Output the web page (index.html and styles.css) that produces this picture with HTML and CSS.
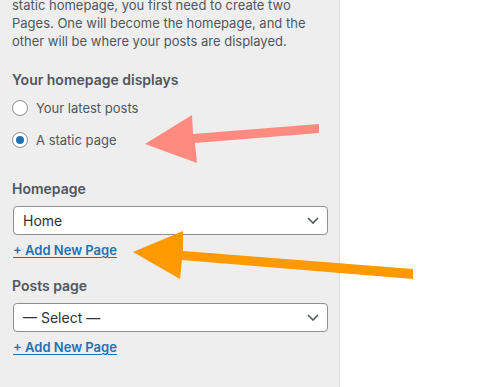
FILE: index.html
```html
<!DOCTYPE html>
<html lang="en">
<head>
    <meta charset="UTF-8">
    <title>Homepage Settings</title>
    <link rel="stylesheet" href="styles.css">
</head>
<body>
    <div class="page">
        <aside class="sidebar">
            <p class="description">static homepage, you first need to create two Pages. One will become the homepage, and the other will be where your posts are displayed.</p>

            <fieldset class="field field-displays">
                <legend class="field-title">Your homepage displays</legend>
                <div class="radio-list">
                    <label class="radio-row">
                        <span class="radio"></span>
                        <span>Your latest posts</span>
                    </label>
                    <label class="radio-row">
                        <span class="radio checked"></span>
                        <span>A static page</span>
                    </label>
                </div>
            </fieldset>

            <div class="field field-homepage">
                <div class="field-title">Homepage</div>
                <div class="select">
                    <span>Home</span>
                    <svg class="chevron" width="12" height="7" viewBox="0 0 12 7"><path d="M1 1l5 5 5-5" fill="none" stroke="#50575e" stroke-width="1.6"/></svg>
                </div>
                <a class="add-link" href="#">+ Add New Page</a>
            </div>

            <div class="field field-posts">
                <div class="field-title">Posts page</div>
                <div class="select">
                    <span>&mdash; Select &mdash;</span>
                    <svg class="chevron" width="12" height="7" viewBox="0 0 12 7"><path d="M1 1l5 5 5-5" fill="none" stroke="#50575e" stroke-width="1.6"/></svg>
                </div>
                <a class="add-link" href="#">+ Add New Page</a>
            </div>
        </aside>
        <main class="preview"></main>

        <!-- annotation arrows drawn over the screenshot -->
        <svg class="arrows" width="500" height="387" viewBox="0 0 500 387">
            <polygon fill="#ff8a7f" points="145,144 192,115 193,134 319,124 319,133 195,143 197,163"/>
            <polygon fill="#ff9900" points="133,252 183,231 183,251 413,269 413,279 182,260 180,279"/>
        </svg>
    </div>
</body>
</html>
```

FILE: styles.css
```css
* {
    margin: 0;
    padding: 0;
    box-sizing: border-box;
}

body {
    font-family: Inter, "Liberation Sans", sans-serif;
    background: #fff;
    color: #50575e;
    width: 500px;
    height: 387px;
    overflow: hidden;
}

.page {
    position: relative;
    display: flex;
    height: 387px;
}

.sidebar {
    width: 340px;
    background: #eeeeee;
    border-right: 1px solid #dcdcde;
    padding: 0 12px;
    display: flex;
    flex-direction: column;
}

.preview {
    flex: 1;
    background: #fff;
}

.description {
    font-size: 13px;
    line-height: 18px;
    margin-top: -4px;
}

/* Fields */
.field {
    border: none;
    display: flex;
    flex-direction: column;
    align-items: flex-start;
}

.field-displays {
    margin-top: 20px;
}

.field-homepage {
    margin-top: 27px;
}

.field-posts {
    margin-top: 18px;
}

.field-title {
    font-size: 14px;
    font-weight: 600;
    line-height: 20px;
    margin-bottom: 7px;
}

.field-displays .field-title {
    margin-bottom: 6px;
}

.radio-list {
    display: flex;
    flex-direction: column;
    gap: 8px;
}

.radio-row {
    display: flex;
    align-items: center;
    gap: 8px;
    font-size: 13px;
    height: 24px;
}

.radio {
    width: 16px;
    height: 16px;
    border-radius: 50%;
    border: 1px solid #8c8f94;
    background: #fff;
    display: flex;
    align-items: center;
    justify-content: center;
}

.radio.checked::after {
    content: "";
    width: 8px;
    height: 8px;
    border-radius: 50%;
    background: #2271b1;
}

.select {
    width: 315px;
    height: 29px;
    margin-left: 1px;
    background: #fff;
    border: 1px solid #8c8f94;
    border-radius: 4px;
    display: flex;
    align-items: center;
    justify-content: space-between;
    padding: 0 8px 0 9px;
    font-size: 14px;
    color: #2c3338;
}

.add-link {
    display: inline-block;
    line-height: 16px;
    margin-top: 7px;
    margin-left: 1px;
    font-size: 13px;
    font-weight: 600;
    color: #2271b1;
    text-decoration: underline;
    text-underline-offset: 2px;
}

/* Arrows */
.arrows {
    position: absolute;
    top: 0;
    left: 0;
    pointer-events: none;
}
```
